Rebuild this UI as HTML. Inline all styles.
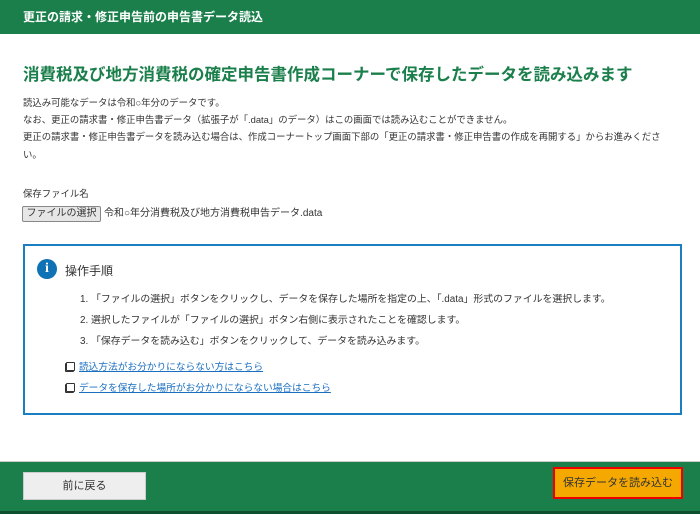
<!DOCTYPE html>
<html><head><meta charset="utf-8"><style>
*{margin:0;padding:0;box-sizing:border-box}
body{width:700px;height:514px;overflow:hidden;background:#fff;font-family:"Liberation Sans","Noto Sans CJK JP",sans-serif;color:#333;position:relative}
.hd{position:absolute;left:0;top:0;width:700px;height:34px;background:#1a7f4b;color:#fff;font-size:12px;font-weight:bold;line-height:34px;padding-left:23px}
.tt{position:absolute;left:23px;top:61px;font-size:16.5px;font-weight:bold;color:#1a7f4b;white-space:nowrap;letter-spacing:0}
.p{position:absolute;left:23px;font-size:9.4px;white-space:nowrap;line-height:12px}
.fb{position:absolute;left:22px;top:206px;width:79px;height:16px;border:1px solid #888;background:#e6e6e6;font-size:10px;line-height:14px;text-align:center;border-radius:2px}
.box{position:absolute;left:23px;top:244px;width:659px;height:171px;border:2px solid #1a7fc1}
.ic{position:absolute;left:12px;top:13px;width:20px;height:20px;border-radius:50%;background:#0e72b5;color:#fff;font-weight:bold;font-size:14px;text-align:center;line-height:20px;font-family:"Liberation Serif",serif}
.bt{position:absolute;left:40px;top:16px;font-size:12px}
.li{position:absolute;left:55px;font-size:9.9px;white-space:nowrap}
.lk{position:absolute;left:54px;font-size:9.7px;color:#1a6fc1;text-decoration:underline;white-space:nowrap}
.lk:before{content:"";position:absolute;left:-13px;top:3px;width:7px;height:7px;border:1.5px solid #333;border-radius:1px;box-shadow:-1px 1px 0 #333}
.ft{position:absolute;left:0;top:461px;width:700px;height:53px;background:#1a7f4b;border-top:1px solid #ccc}
.dk{position:absolute;left:0;top:511px;width:700px;height:3px;background:#0f4f2e}
.b1{position:absolute;left:23px;top:472px;width:123px;height:28px;background:#eee;border:1px solid #ccc;font-size:11px;line-height:26px;text-align:center;color:#333}
.b2{position:absolute;left:553px;top:467px;width:130px;height:32px;background:#f5a800;border:2px solid #e00;font-size:11px;line-height:28px;text-align:center;color:#333}
</style></head><body>
<div class="hd">更正の請求・修正申告前の申告書データ読込</div>
<div class="tt">消費税及び地方消費税の確定申告書作成コーナーで保存したデータを読み込みます</div>
<div class="p" style="top:97px">読込み可能なデータは令和○年分のデータです。</div>
<div class="p" style="top:114px">なお、更正の請求書・修正申告書データ（拡張子が「.data」のデータ）はこの画面では読み込むことができません。</div>
<div class="p" style="top:131px">更正の請求書・修正申告書データを読み込む場合は、作成コーナートップ画面下部の「更正の請求書・修正申告書の作成を再開する」からお進みくださ</div>
<div class="p" style="top:149px">い。</div>
<div class="p" style="top:188px">保存ファイル名</div>
<div class="fb">ファイルの選択</div>
<div class="p" style="left:104px;top:208px;font-size:10px">令和○年分消費税及び地方消費税申告データ.data</div>
<div class="box">
<div class="ic">i</div>
<div class="bt">操作手順</div>
<div class="li" style="top:45px">1. 「ファイルの選択」ボタンをクリックし、データを保存した場所を指定の上、「.data」形式のファイルを選択します。</div>
<div class="li" style="top:66px">2. 選択したファイルが「ファイルの選択」ボタン右側に表示されたことを確認します。</div>
<div class="li" style="top:87px">3. 「保存データを読み込む」ボタンをクリックして、データを読み込みます。</div>
<div class="lk" style="top:113px">読込方法がお分かりにならない方はこちら</div>
<div class="lk" style="top:134px">データを保存した場所がお分かりにならない場合はこちら</div>
</div>
<div class="ft"></div>
<div class="dk"></div>
<div class="b1">前に戻る</div>
<div class="b2">保存データを読み込む</div>
</body></html>
